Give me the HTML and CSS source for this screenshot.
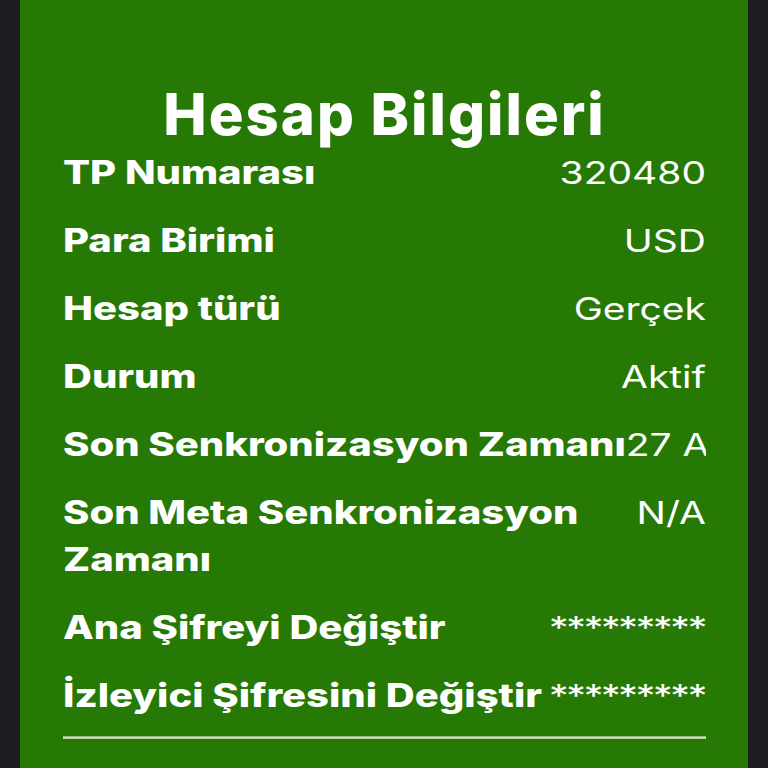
FILE: index.html
```html
<!DOCTYPE html>
<html lang="tr">
<head>
<meta charset="utf-8">
<title>Hesap Bilgileri</title>
<link rel="stylesheet" href="styles.css">
</head>
<body>
<div class="panel">
  <h1 class="title">Hesap Bilgileri</h1>
  <div class="sheet">
    <div class="rows">
      <div class="row"><div class="label">TP Numarası</div><div class="value">320480</div></div>
      <div class="row"><div class="label">Para Birimi</div><div class="value">USD</div></div>
      <div class="row"><div class="label">Hesap türü</div><div class="value">Gerçek</div></div>
      <div class="row"><div class="label">Durum</div><div class="value">Aktif</div></div>
      <div class="row"><div class="label label-fixed">Son Senkronizasyon Zamanı</div><div class="value value-clip">27 Ara 2023 14:32</div></div>
      <div class="row"><div class="label">Son Meta Senkronizasyon Zamanı</div><div class="value">N/A</div></div>
      <div class="row"><div class="label">Ana Şifreyi Değiştir</div><div class="value value-stars">*********</div></div>
      <div class="row"><div class="label">İzleyici Şifresini Değiştir</div><div class="value value-stars">*********</div></div>
    </div>
    <div class="divider"></div>
  </div>
</div>
</body>
</html>
```
FILE: styles.css
```css
html, body {
  margin: 0;
  padding: 0;
  background: #1c1c21;
  height: 100%;
  overflow: hidden;
}
.panel {
  margin: 0 20px;
  background: #267905;
  height: 100%;
  padding: 0 42px 0 43px;
  box-sizing: border-box;
  color: #ffffff;
  font-family: Inter, "Liberation Sans", sans-serif;
}
.title {
  margin: 0;
  padding-top: 79px;
  font-size: 58px;
  line-height: 70px;
  font-weight: 800;
  text-align: center;
  letter-spacing: 2px;
}
/* the source screenshot is squashed vertically; the sheet reproduces that */
.sheet {
  margin-top: 1px;
  transform: scaleY(0.8);
  transform-origin: top center;
}
.rows {
  display: flex;
  flex-direction: column;
  gap: 27px;
}
.row {
  display: flex;
  justify-content: space-between;
  align-items: baseline;
}
.label {
  flex: 0 1 auto;
  font-size: 40px;
  line-height: 58px;
  font-weight: 800;
}
.label-fixed {
  flex-shrink: 0;
}
.value {
  flex: 0 0 auto;
  white-space: nowrap;
  font-size: 39px;
  line-height: 58px;
  font-weight: 400;
  text-align: right;
}
.value-clip {
  flex: 1 1 0;
  min-width: 0;
  overflow: hidden;
  text-align: left;
}
.value-stars {
  letter-spacing: -2.2px;
  margin-right: 1px;
}
.divider {
  margin-top: 22px;
  height: 2.5px;
  background: #d7dfd0;
}
```
